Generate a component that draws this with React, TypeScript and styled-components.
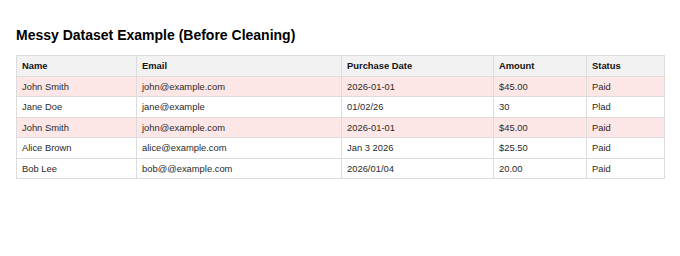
import styled, { createGlobalStyle } from 'styled-components'

const GlobalStyle = createGlobalStyle`
  html, body {
    margin: 0;
    padding: 0;
    background: #ffffff;
  }
  body {
    font-family: "Liberation Sans", Arial, sans-serif;
    color: #111;
  }
`

const Page = styled.div`
  padding: 27px 16px 16px;
`

const Title = styled.h2`
  margin: 0 0 11px;
  font-size: 14px;
  font-weight: 700;
  color: #000;
  line-height: 17px;
`

const Table = styled.table`
  width: 100%;
  table-layout: fixed;
  border-collapse: collapse;
  font-size: 9.4px;
`

const Col = styled.col<{ $w: number }>`
  width: ${(p) => p.$w}px;
`

const HeadCell = styled.th`
  text-align: left;
  font-weight: 700;
  background: #f2f2f2;
  border: 1px solid #dcdcdc;
  padding: 5px 5px;
  line-height: 9.5px;
  color: #111;
`

const Row = styled.tr<{ $dup?: boolean }>`
  background: ${(p) => (p.$dup ? '#fde6e6' : '#ffffff')};
`

const Cell = styled.td`
  border: 1px solid #dcdcdc;
  padding: 5px 5px;
  line-height: 9.5px;
  color: #2a2a2a;
`

const columns = [
  { label: 'Name', w: 120 },
  { label: 'Email', w: 205 },
  { label: 'Purchase Date', w: 152 },
  { label: 'Amount', w: 93 },
  { label: 'Status', w: 78 },
]

const rows = [
  { cells: ['John Smith', 'john@example.com', '2026-01-01', '$45.00', 'Paid'], dup: true },
  { cells: ['Jane Doe', 'jane@example', '01/02/26', '30', 'Plad'] },
  { cells: ['John Smith', 'john@example.com', '2026-01-01', '$45.00', 'Paid'], dup: true },
  { cells: ['Alice Brown', 'alice@example.com', 'Jan 3 2026', '$25.50', 'Paid'] },
  { cells: ['Bob Lee', 'bob@@example.com', '2026/01/04', '20.00', 'Paid'] },
]

const App = () => {
  return (
    <Page>
      <GlobalStyle />
      <Title>Messy Dataset Example (Before Cleaning)</Title>
      <Table>
        <colgroup>
          {columns.map((c) => (
            <Col key={c.label} $w={c.w} />
          ))}
        </colgroup>
        <thead>
          <tr>
            {columns.map((c) => (
              <HeadCell key={c.label}>{c.label}</HeadCell>
            ))}
          </tr>
        </thead>
        <tbody>
          {rows.map((r, i) => (
            <Row key={i} $dup={r.dup}>
              {r.cells.map((v, j) => (
                <Cell key={j}>{v}</Cell>
              ))}
            </Row>
          ))}
        </tbody>
      </Table>
    </Page>
  )
}

export default App
